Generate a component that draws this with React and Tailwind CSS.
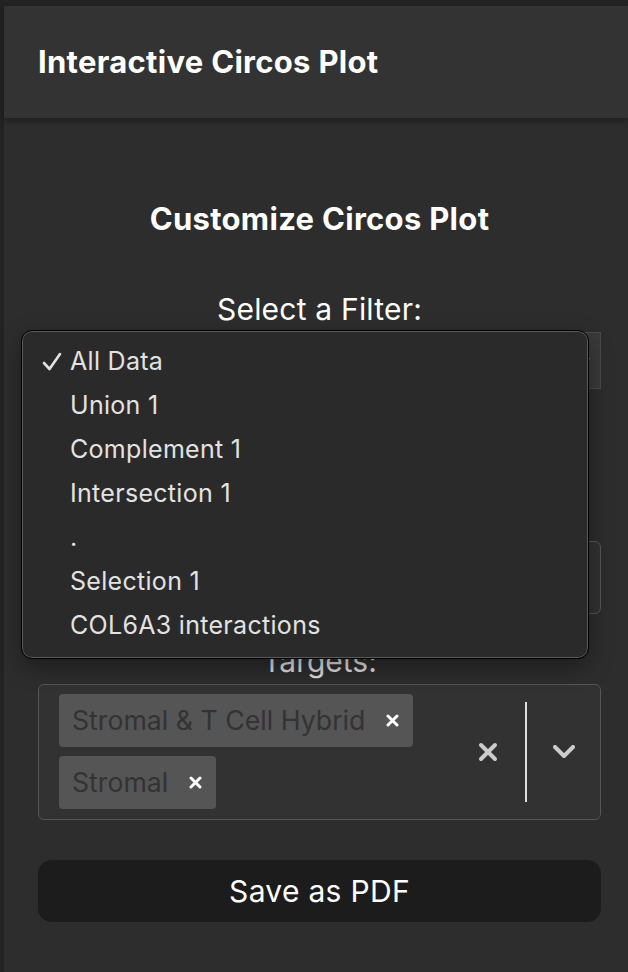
import React from "react";

const font = { fontFamily: "Inter, 'Noto Sans', sans-serif" };

const Tag = ({ label }) => (
  <div className="flex items-center h-[53px] rounded bg-[#555555] pl-[13px] pr-[14px]">
    <span className="text-[26.7px] text-[#333333]">{label}</span>
    <svg className="ml-[21px]" width="13" height="13" viewBox="0 0 13 13">
      <path d="M2 2 L11 11 M11 2 L2 11" stroke="#ffffff" strokeWidth="3" strokeLinecap="round" />
    </svg>
  </div>
);

const App = () => {
  const options = ["All Data", "Union 1", "Complement 1", "Intersection 1", ".", "Selection 1", "COL6A3 interactions"];

  return (
    <div className="w-[628px] h-[972px] bg-[#232323] pt-[6px] pl-[4px] overflow-hidden" style={font}>
      <div className="relative h-full bg-[#2d2d2d] text-white">
        {/* header */}
        <div className="h-[112px] bg-[#333333] flex items-center pl-[34px] shadow-[0_3px_6px_rgba(0,0,0,0.35)]">
          <h1 className="text-[31px] font-bold tracking-[0.3px]">Interactive Circos Plot</h1>
        </div>

        <div className="pl-[34px] pr-[27px] flex flex-col">
          <h2 className="mt-[81px] text-center text-[31px] font-bold leading-[40px] tracking-[0.3px]">Customize Circos Plot</h2>

          <label className="mt-[50px] text-center text-[30px] leading-[40px] tracking-[0.2px]">Select a Filter:</label>
          <div className="mt-[3px] h-[57px] bg-[#3a3a3a] border border-[#4a4a4a] flex items-center justify-end pr-[10px]">
            <svg width="12" height="8" viewBox="0 0 12 8">
              <path d="M1 1 L6 6 L11 1" stroke="#ddd" strokeWidth="2" fill="none" />
            </svg>
          </div>

          <label className="mt-[102px] text-center text-[30px] leading-[40px]">Sources:</label>
          <div className="mt-[10px] h-[73px] rounded-md border border-[#555555] bg-[#323232]" />

          <label className="mt-[27px] text-center text-[30px] leading-[40px] text-[#dddddd]">Targets:</label>
          <div className="mt-[3px] h-[136px] rounded-md border border-[#555555] bg-[#323232] flex items-center pl-[20px] pr-[25px]">
            <div className="flex-1 flex flex-wrap gap-y-[9px] gap-x-[8px] w-[370px] -mt-[2px]">
              <Tag label="Stromal & T Cell Hybrid" />
              <Tag label="Stromal" />
            </div>
            <svg className="mr-[27px]" width="20" height="20" viewBox="0 0 20 20">
              <path d="M3 3 L17 17 M17 3 L3 17" stroke="#cccccc" strokeWidth="4" strokeLinecap="round" />
            </svg>
            <div className="w-[2px] h-[100px] bg-[#dddddd]" />
            <svg className="ml-[26px]" width="22" height="14" viewBox="0 0 22 14">
              <path d="M2 2 L11 11 L20 2" stroke="#cccccc" strokeWidth="4" fill="none" strokeLinecap="round" strokeLinejoin="round" />
            </svg>
          </div>

          <button className="mt-[40px] h-[62px] rounded-[14px] bg-[#1c1c1c] text-[30px] tracking-[0.3px] text-white">Save as PDF</button>
        </div>

        {/* open select menu */}
        <div className="absolute left-[18px] top-[325px] w-[566px] h-[327px] rounded-[10px] bg-[#2a2a2a] border border-[#5a5a5a] outline outline-1 outline-black shadow-[0_8px_24px_rgba(0,0,0,0.4)] pt-[8px]">
          {options.map((o, i) => (
            <div key={o} className="h-[44px] flex items-center text-[25px] tracking-[0.3px] text-[#e2e2e2]">
              <span className="w-[47px] pl-[19px] flex items-center">
                {i === 0 && (
                  <svg width="20" height="20" viewBox="0 0 20 20">
                    <path d="M2 11 L7.5 17 L18 2" stroke="#e2e2e2" strokeWidth="2.6" fill="none" strokeLinecap="round" strokeLinejoin="round" />
                  </svg>
                )}
              </span>
              <span>{o}</span>
            </div>
          ))}
        </div>
      </div>
    </div>
  );
};

export default App;
